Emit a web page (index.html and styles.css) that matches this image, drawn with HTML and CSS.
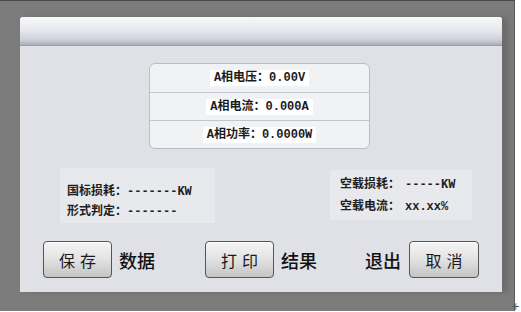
FILE: index.html
```html
<!DOCTYPE html>
<html lang="zh-CN">
<head>
    <meta charset="UTF-8">
    <meta name="viewport" content="width=device-width, initial-scale=1.0">
    <title>空载测试</title>
    <link rel="stylesheet" href="styles.css">
</head>
<body>

    <div class="screen">
        <div class="panel">
            <div class="panel-header"></div>

            <div class="panel-body">
                <div class="readings">
                    <div class="reading-row"><span class="tag">A相电压：0.00V</span></div>
                    <div class="reading-row"><span class="tag">A相电流：0.000A</span></div>
                    <div class="reading-row"><span class="tag">A相功率：0.0000W</span></div>
                </div>

                <div class="stats">
                    <div class="stat-box stat-left">
                        <div class="stat-line">国标损耗：-------KW</div>
                        <div class="stat-line">形式判定：-------</div>
                    </div>
                    <div class="stat-box stat-right">
                        <span>空载损耗：</span><span>-----KW</span>
                        <span>空载电流：</span><span>xx.xx%</span>
                    </div>
                </div>

                <div class="actions">
                    <button type="button" class="btn">保存</button>
                    <span class="caption">数据</span>
                    <button type="button" class="btn btn-print">打印</button>
                    <span class="caption">结果</span>
                    <span class="caption caption-exit">退出</span>
                    <button type="button" class="btn btn-cancel">取消</button>
                </div>
            </div>
        </div>
    </div>

    <span class="corner-mark">+</span>

</body>
</html>
```

FILE: styles.css
```css
body {
    margin: 0;
    background-color: #ffffff;
    font-family: "Noto Sans CJK SC", "Liberation Sans", sans-serif;
    position: relative;
    height: 312px;
    overflow: hidden;
}

.screen {
    width: 515px;
    height: 311px;
    background-color: #7b7b7b;
    border-top: 1px solid #4a4a4a;
    border-right: 1px solid #5c5c5c;
    padding: 16px 0 0 20px;
    box-sizing: border-box;
}

.panel {
    width: 482px;
    height: 275px;
    background-color: #dfe1e6;
    border-radius: 3px 3px 0 0;
    box-shadow: 6px 0 5px rgba(0, 0, 0, 0.12);
    display: flex;
    flex-direction: column;
}

.panel-header {
    height: 28px;
    border-radius: 3px 3px 0 0;
    background: linear-gradient(#f7f8fa, #e8e9ee 45%, #d0d2da 80%, #abadbb);
    border-bottom: 1px solid #9a9cab;
}

.panel-body {
    flex: 1;
    padding-top: 17px;
}

.readings {
    width: 219px;
    margin-left: 129px;
    background-color: #f1f2f4;
    border: 1px solid #b9bdc6;
    border-radius: 6px;
}

.reading-row {
    height: 27px;
    display: flex;
    align-items: center;
    justify-content: center;
    border-top: 1px solid #c2c5cd;
}

.reading-row:first-child {
    height: 28px;
    border-top: none;
}

.tag {
    background-color: #ffffff;
    padding: 0 4px;
    font-family: "Liberation Mono", "Noto Sans CJK SC", monospace;
    font-weight: bold;
    font-size: 12px;
    line-height: 16px;
    color: #1a1a1a;
}

.stats {
    display: flex;
    justify-content: space-between;
    align-items: flex-start;
    margin-top: 19px;
    padding: 0 30px 0 40px;
}

.stat-box {
    background-color: #e8e9ec;
    font-family: "Liberation Mono", "Noto Sans CJK SC", monospace;
    font-weight: bold;
    font-size: 12px;
    color: #1e1e1e;
}

.stat-left {
    width: 155px;
    height: 55px;
    padding: 14px 0 0 7px;
    box-sizing: border-box;
}

.stat-line {
    line-height: 20px;
}

.stat-right {
    width: 142px;
    height: 50px;
    margin-top: 2px;
    padding: 6px 0 0 10px;
    box-sizing: border-box;
    display: grid;
    grid-template-columns: 60px auto;
    column-gap: 5px;
    line-height: 18px;
}

.actions {
    display: flex;
    align-items: center;
    margin-top: 18px;
    padding-left: 23px;
}

.btn {
    width: 69px;
    height: 37px;
    border: 1px solid #555;
    border-radius: 4px;
    background: linear-gradient(#f5f5f5, #e2e2e2 50%, #c4c4c4);
    box-shadow: inset 0 1px 0 #fff;
    font-family: "Noto Sans CJK SC", sans-serif;
    font-size: 16px;
    letter-spacing: 5px;
    padding: 0 0 0 5px;
    color: #1a1a1a;
}

.caption {
    font-size: 18px;
    font-weight: 500;
    color: #111;
    margin-left: 7px;
}

.btn-print {
    margin-left: 50px;
}

.caption-exit {
    margin-left: 48px;
}

.btn-cancel {
    margin-left: 8px;
    width: 70px;
}

.corner-mark {
    position: absolute;
    right: 1px;
    bottom: 0;
    font-family: "DejaVu Sans", sans-serif;
    font-size: 10px;
    line-height: 10px;
    color: #555;
}
```
